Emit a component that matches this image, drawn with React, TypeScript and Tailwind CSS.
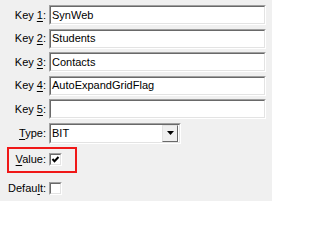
// Registry value editor panel — classic Win32 property form.

const font = { fontFamily: '"Liberation Sans", Arial, sans-serif' };

function Sunken({ className, children }: { className: string; children?: React.ReactNode }) {
  return (
    <div className={`border border-t-[#a0a0a0] border-l-[#a0a0a0] border-b-white border-r-white ${className}`}>
      <div className="flex h-full w-full items-center border border-t-[#696969] border-l-[#696969] border-b-[#e3e3e3] border-r-[#e3e3e3] bg-white">
        {children}
      </div>
    </div>
  );
}

function Label({ pre, key_, post, w = "w-[46px]" }: { pre: string; key_: string; post: string; w?: string }) {
  return (
    <span className={`${w} shrink-0 text-right`}>
      {pre}
      <span className="underline underline-offset-[2px]">{key_}</span>
      {post}
    </span>
  );
}

function KeyRow({ n, value }: { n: number; value: string }) {
  return (
    <div className="flex h-[20px] items-center gap-[3px]">
      <Label pre="Key " key_={String(n)} post=":" />
      <Sunken className="h-[20px] w-[217px]">
        <span className="pl-[1px]">{value}</span>
      </Sunken>
    </div>
  );
}

function Check({ checked }: { checked: boolean }) {
  return (
    <Sunken className="h-[13px] w-[13px]">
      {checked && (
        <svg viewBox="0 0 9 9" className="h-[9px] w-[9px]">
          <path d="M1.5 4 L3.5 6.3 L7.5 2" fill="none" stroke="black" strokeWidth="2" />
        </svg>
      )}
    </Sunken>
  );
}

export default function App() {
  const keys = ["SynWeb", "Students", "Contacts", "AutoExpandGridFlag", ""];
  return (
    <div className="h-[201px] w-[272px] bg-[#f0f0f0] pt-[5px] text-[11px] leading-none text-black" style={font}>
      <div className="flex flex-col gap-[3.5px]">
        {keys.map((v, i) => (
          <KeyRow key={i} n={i + 1} value={v} />
        ))}
        <div className="flex h-[21px] items-center gap-[3px]">
          <Label pre="" key_="T" post="ype:" />
          <Sunken className="h-[21px] w-[132px]">
            <span className="flex-1 pl-[1px]">BIT</span>
            <div className="mr-[1px] flex h-[17px] w-[16px] items-center justify-center border border-t-[#e3e3e3] border-l-[#e3e3e3] border-b-[#696969] border-r-[#696969] bg-[#f0f0f0]">
              <svg viewBox="0 0 7 4" className="h-[4px] w-[7px]">
                <path d="M0 0 H7 L3.5 4 Z" fill="black" />
              </svg>
            </div>
          </Sunken>
        </div>
      </div>

      <div className="ml-[7px] mt-[3px] flex h-[26px] w-[70px] items-center gap-[3px] border-2 border-[#f01818]">
        <Label pre="" key_="V" post="alue:" w="w-[37px]" />
        <Check checked />
      </div>

      <div className="mt-[9px] flex items-center gap-[3px]">
        <Label pre="Defau" key_="l" post="t:" />
        <Check checked={false} />
      </div>
    </div>
  );
}
